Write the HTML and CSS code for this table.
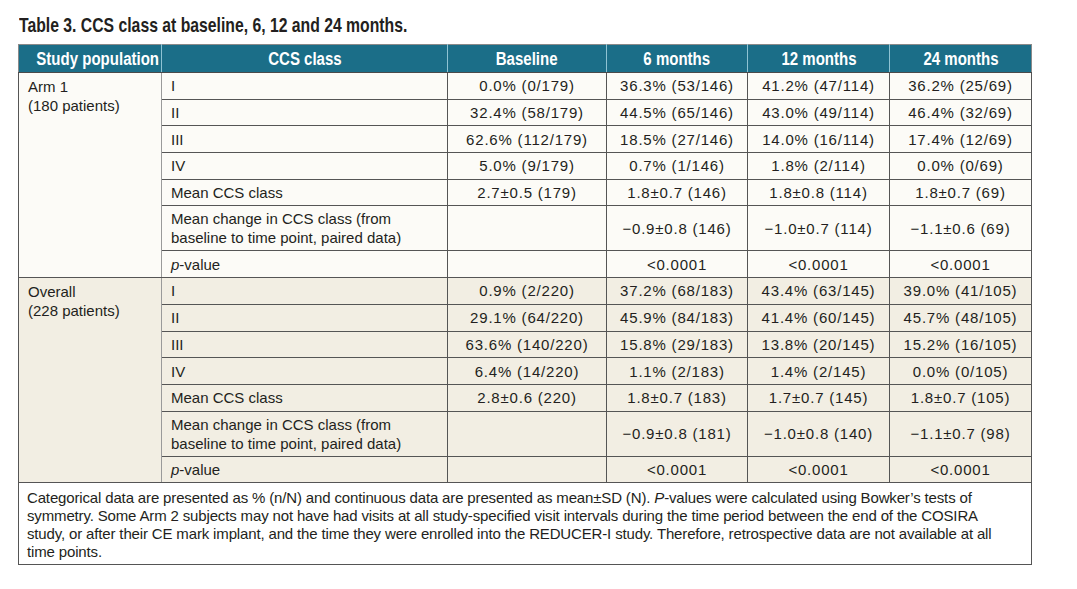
FILE: index.html
```html
<!DOCTYPE html>
<html>
<head>
<meta charset="utf-8">
<link rel="stylesheet" href="styles.css">
</head>
<body>
<div class="page">
  <h1 class="title"><span class="cond">Table 3. CCS class at baseline, 6, 12 and 24 months.</span></h1>
  <table class="tbl">
    <colgroup>
      <col class="c-pop"><col class="c-cls"><col class="c-base"><col class="c-m6"><col class="c-m12"><col class="c-m24">
    </colgroup>
    <thead>
      <tr class="head">
        <th><span class="cond">Study population</span></th><th><span class="cond">CCS class</span></th><th><span class="cond">Baseline</span></th><th><span class="cond">6 months</span></th><th><span class="cond">12 months</span></th><th><span class="cond">24 months</span></th>
      </tr>
    </thead>
    <tbody class="arm">
      <tr class="r1"><td class="pop" rowspan="7">Arm 1<br>(180 patients)</td><td class="cls">I</td><td class="num">0.0% (0/179)</td><td class="num">36.3% (53/146)</td><td class="num">41.2% (47/114)</td><td class="num">36.2% (25/69)</td></tr>
      <tr class="r1"><td class="cls">II</td><td class="num">32.4% (58/179)</td><td class="num">44.5% (65/146)</td><td class="num">43.0% (49/114)</td><td class="num">46.4% (32/69)</td></tr>
      <tr class="r1"><td class="cls">III</td><td class="num">62.6% (112/179)</td><td class="num">18.5% (27/146)</td><td class="num">14.0% (16/114)</td><td class="num">17.4% (12/69)</td></tr>
      <tr class="r1"><td class="cls">IV</td><td class="num">5.0% (9/179)</td><td class="num">0.7% (1/146)</td><td class="num">1.8% (2/114)</td><td class="num">0.0% (0/69)</td></tr>
      <tr class="r1"><td class="cls">Mean CCS class</td><td class="num">2.7±0.5 (179)</td><td class="num">1.8±0.7 (146)</td><td class="num">1.8±0.8 (114)</td><td class="num">1.8±0.7 (69)</td></tr>
      <tr class="r2"><td class="cls">Mean change in CCS class (from<br>baseline to time point, paired data)</td><td class="num"></td><td class="num">−0.9±0.8 (146)</td><td class="num">−1.0±0.7 (114)</td><td class="num">−1.1±0.6 (69)</td></tr>
      <tr class="r1"><td class="cls"><i>p</i>-value</td><td class="num"></td><td class="num">&lt;0.0001</td><td class="num">&lt;0.0001</td><td class="num">&lt;0.0001</td></tr>
    </tbody>
    <tbody class="overall">
      <tr class="r1"><td class="pop" rowspan="7">Overall<br>(228 patients)</td><td class="cls">I</td><td class="num">0.9% (2/220)</td><td class="num">37.2% (68/183)</td><td class="num">43.4% (63/145)</td><td class="num">39.0% (41/105)</td></tr>
      <tr class="r1"><td class="cls">II</td><td class="num">29.1% (64/220)</td><td class="num">45.9% (84/183)</td><td class="num">41.4% (60/145)</td><td class="num">45.7% (48/105)</td></tr>
      <tr class="r1"><td class="cls">III</td><td class="num">63.6% (140/220)</td><td class="num">15.8% (29/183)</td><td class="num">13.8% (20/145)</td><td class="num">15.2% (16/105)</td></tr>
      <tr class="r1"><td class="cls">IV</td><td class="num">6.4% (14/220)</td><td class="num">1.1% (2/183)</td><td class="num">1.4% (2/145)</td><td class="num">0.0% (0/105)</td></tr>
      <tr class="r1"><td class="cls">Mean CCS class</td><td class="num">2.8±0.6 (220)</td><td class="num">1.8±0.7 (183)</td><td class="num">1.7±0.7 (145)</td><td class="num">1.8±0.7 (105)</td></tr>
      <tr class="r2"><td class="cls">Mean change in CCS class (from<br>baseline to time point, paired data)</td><td class="num"></td><td class="num">−0.9±0.8 (181)</td><td class="num">−1.0±0.8 (140)</td><td class="num">−1.1±0.7 (98)</td></tr>
      <tr class="r1"><td class="cls"><i>p</i>-value</td><td class="num"></td><td class="num">&lt;0.0001</td><td class="num">&lt;0.0001</td><td class="num">&lt;0.0001</td></tr>
    </tbody>
    <tfoot>
      <tr class="foot"><td colspan="6">Categorical data are presented as % (n/N) and continuous data are presented as mean±SD (N). <i>P</i>-values were calculated using Bowker’s tests of<br>symmetry. Some Arm 2 subjects may not have had visits at all study-specified visit intervals during the time period between the end of the COSIRA<br>study, or after their CE mark implant, and the time they were enrolled into the REDUCER-I study. Therefore, retrospective data are not available at all<br>time points.</td></tr>
    </tfoot>
  </table>
</div>
</body>
</html>
```
FILE: styles.css
```css
html, body {
  margin: 0;
  padding: 0;
  background: #ffffff;
}
.page {
  padding: 15px 0 0 18px;
  font-family: "Liberation Sans", Arial, sans-serif;
  color: #231f20;
}
.cond {
  display: inline-block;
  white-space: nowrap;
  transform: scaleX(0.8);
}
.title {
  margin: 0 0 8px 1px;
  font-family: "Liberation Sans", Arial, sans-serif;
  font-weight: 700;
  font-size: 19.7px;
  line-height: 21px;
  color: #231f20;
}
.title .cond { transform-origin: left center; }
.tbl {
  border-collapse: collapse;
  table-layout: fixed;
  width: 1013px;
  border: 1px solid #8a8a8a;
  font-size: 15px;
}
.c-pop { width: 143px; }
.c-cls { width: 286px; }
.c-base { width: 159px; }
.c-m6 { width: 141px; }
.c-m12 { width: 142px; }
.c-m24 { width: 142px; }

.head th {
  height: 27px;
  padding: 0 2px;
  background: #1b6e88;
  color: #ffffff;
  font-family: "Liberation Sans", Arial, sans-serif;
  font-weight: 700;
  font-size: 18.8px;
  line-height: 20px;
  white-space: nowrap;
  text-align: center;
  border-left: 1px solid #8fc3d3;
  border-bottom: 1px solid #4a4a4a;
}
.head th:first-child { border-left: none; }

td {
  padding: 0 9px;
  line-height: 19px;
  border: 1px solid #555555;
  vertical-align: middle;
}
.r1 td { height: 25.7px; }
.r2 td { height: 44px; }
.pop {
  vertical-align: top;
  padding-top: 4px;
  border-right-color: #9a9a9a;
}
.num {
  text-align: center;
  padding: 0 2px;
  letter-spacing: 0.8px;
}
.arm td { background: #fcfbf7; }
.overall td { background: #f2eee3; }
.overall tr:first-child td { border-top: 1px solid #3e3e3e; }
.foot td {
  background: #ffffff;
  height: 73px;
  padding: 6px 8px 2px 8px;
  line-height: 18px;
  letter-spacing: -0.15px;
  white-space: nowrap;
  vertical-align: top;
  border-top: 1px solid #3e3e3e;
}
```
